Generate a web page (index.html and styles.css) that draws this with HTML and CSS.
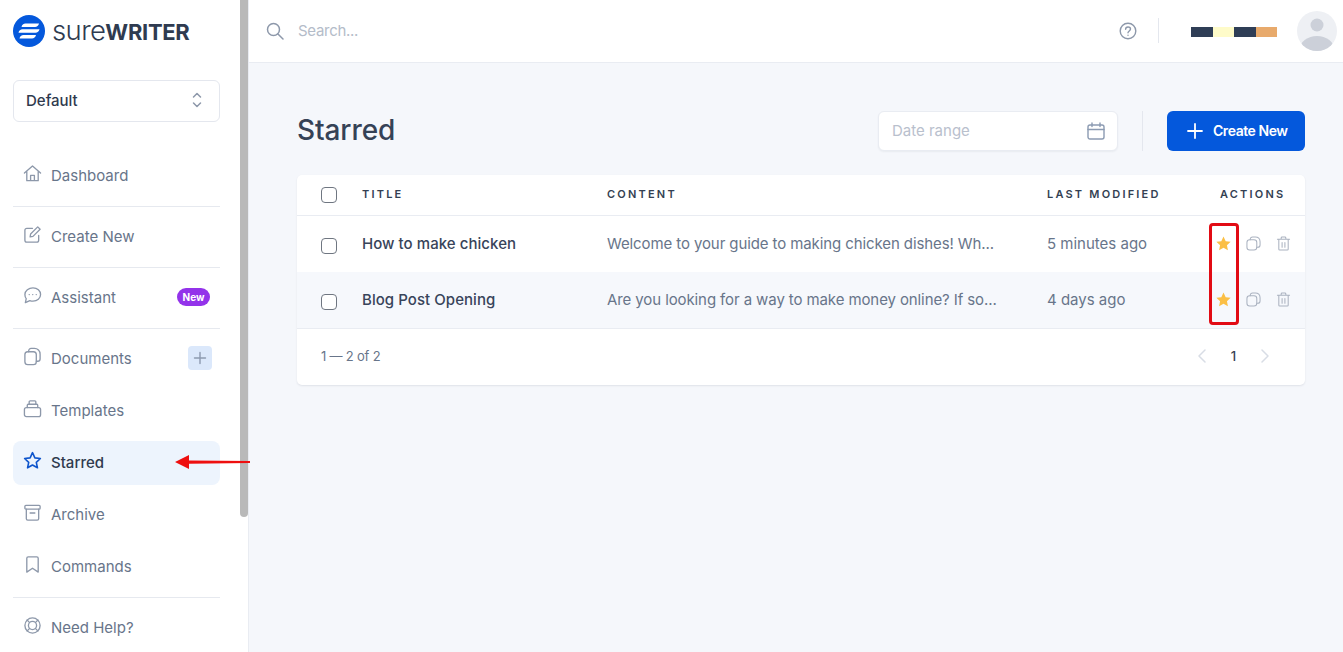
FILE: index.html
```html
<!DOCTYPE html>
<html lang="en">
<head>
<meta charset="utf-8" />
<title>SureWriter - Starred</title>
<link rel="stylesheet" href="styles.css">
</head>
<body>

<div class="app">
  <aside class="sidebar">
    <div class="logo">
      <svg class="logo-mark" width="32" height="32" viewBox="0 0 32 32">
        <circle cx="16" cy="16" r="16" fill="#0458dc"/>
        <path d="M8.500 12c.4-2.300 2-3.500 4-3.500H26c-.5 2.300-2 3.500-4 3.500zM5.500 17.700c.4-2.300 2-3.500 4-3.500h17c-.5 2.300-2 3.500-4 3.500zM6.500 23.400c.4-2.300 2-3.500 4-3.500H23c-.5 2.300-2 3.500-4 3.500z" fill="#fff"/>
      </svg>
      <span class="logo-text"><span class="logo-thin">sure</span><b>WRITER</b></span>
    </div>

    <div class="select">
      <span>Default</span>
      <svg width="12" height="18" viewBox="0 0 12 18" fill="none" stroke="#8d98aa" stroke-width="1.500" stroke-linecap="round" stroke-linejoin="round"><path d="M2.500 6 6 2.500 9.500 6M2.500 12 6 15.500 9.500 12"/></svg>
    </div>

    <nav class="nav">
      <a class="nav-item">
        <svg class="nav-icon" viewBox="0 0 20 20"><path d="M1.500 9.500 10 2l8.500 7.500M4 8v9.500h12V8M8 17.500V12h4v5.500"/></svg>
        Dashboard
      </a>
      <hr class="nav-sep">
      <a class="nav-item">
        <svg class="nav-icon" viewBox="0 0 20 20"><path d="M16.500 11v5a2 2 0 0 1-2 2H4a2 2 0 0 1-2-2V5.500a2 2 0 0 1 2-2h6M8 9.500 15.500 2l2.500 2.500L10.500 12 7.500 12.500z"/></svg>
        Create New
      </a>
      <hr class="nav-sep">
      <a class="nav-item">
        <svg class="nav-icon" viewBox="0 0 20 20"><path d="M10.500 2C15 2 18.500 5 18.500 9s-3.500 7-8 7c-1.200 0-2.300-.2-3.300-.6L2.500 17.500l.9-4.200C2.300 12.100 2 10.600 2 9c0-4 4-7 8.500-7z"/><path d="M6.500 9h.1M10.200 9h.1M13.900 9h.1"/></svg>
        Assistant
        <span class="badge">New</span>
      </a>
      <hr class="nav-sep">
      <a class="nav-item">
        <svg class="nav-icon" viewBox="0 0 20 20"><path d="M6 5V4a2.500 2.500 0 0 1 2.500-2.500H12c3.400 0 6 2.600 6 6V12.500A2.500 2.500 0 0 1 15.500 15H14"/><rect x="2" y="5" width="12" height="13.500" rx="3"/></svg>
        Documents
        <span class="add-btn"><svg width="14" height="14" viewBox="0 0 14 14" fill="none" stroke="#8d9ab0" stroke-width="1.400" stroke-linecap="round"><path d="M7 1.500v11M1.500 7h11"/></svg></span>
      </a>
      <a class="nav-item">
        <svg class="nav-icon" viewBox="0 0 20 20"><rect x="1.500" y="9" width="17" height="9.500" rx="2"/><path d="M4.500 9V6.500a1 1 0 0 1 1-1h9a1 1 0 0 1 1 1V9M6.500 5.500V3a1 1 0 0 1 1-1h5a1 1 0 0 1 1 1v2.500"/></svg>
        Templates
      </a>
      <a class="nav-item active">
        <svg class="nav-icon" viewBox="0 0 20 20"><path d="m10 1.800 2.500 5.400 5.800.7-4.300 4 1.200 5.800-5.200-2.900-5.200 2.900L6 11.900l-4.300-4 5.800-.7z"/></svg>
        Starred
      </a>
      <a class="nav-item">
        <svg class="nav-icon" viewBox="0 0 20 20"><rect x="2" y="2.500" width="16" height="4" rx="1"/><path d="M3.500 6.500v10a1.500 1.500 0 0 0 1.500 1.500h10a1.500 1.500 0 0 0 1.500-1.500v-10M7.500 10.500h5"/></svg>
        Archive
      </a>
      <a class="nav-item">
        <svg class="nav-icon" viewBox="0 0 20 20"><path d="M4 3.500A1.500 1.500 0 0 1 5.500 2h9A1.500 1.500 0 0 1 16 3.500V18l-6-4-6 4z"/></svg>
        Commands
      </a>
      <hr class="nav-sep">
      <a class="nav-item">
        <svg class="nav-icon" viewBox="0 0 20 20"><circle cx="10" cy="10" r="8"/><circle cx="10" cy="10" r="4.300"/><path d="m4.300 4.300 2.700 2.700M15.700 4.300 13 7M4.300 15.700 7 13M15.700 15.700 13 13"/></svg>
        Need Help?
      </a>
    </nav>
    <div class="scroll-thumb"></div>
  </aside>

  <div class="content">
    <header class="topbar">
      <svg class="search-icon" width="18" height="18" viewBox="0 0 18 18" fill="none" stroke="#8d98aa" stroke-width="1.500" stroke-linecap="round"><circle cx="7.500" cy="7.500" r="6"/><path d="m12 12 5 5"/></svg>
      <span class="search-text">Search...</span>
      <svg class="help-icon" width="18" height="18" viewBox="0 0 18 18" fill="none" stroke="#8d98aa" stroke-width="1.400" stroke-linecap="round"><circle cx="9" cy="9" r="7.800"/><path d="M6.600 7.200C6.600 5.800 7.700 5 9 5s2.500.8 2.500 2.100c0 1.800-2.500 1.900-2.500 3.700"/><path d="M9 13.200h.01"/></svg>
      <span class="top-sep"></span>
      <div class="redacted">
        <span class="navy"></span><span class="cream"></span><span class="navy"></span><span class="tan"></span>
      </div>
      <svg class="avatar" width="40" height="40" viewBox="0 0 40 40">
        <defs><clipPath id="avatar-clip"><circle cx="20" cy="20" r="20"/></clipPath></defs>
        <circle cx="20" cy="20" r="20" fill="#eef0f4"/>
        <g clip-path="url(#avatar-clip)" fill="#ccd0d9">
          <circle cx="20" cy="14" r="6.500"/>
          <ellipse cx="20" cy="38" rx="17" ry="13"/>
        </g>
      </svg>
    </header>

    <main class="main">
      <div class="page-head">
        <h1>Starred</h1>
        <div class="date-range">
          <span>Date range</span>
          <svg width="18" height="18" viewBox="0 0 18 18" fill="none" stroke="#8c9bb2" stroke-width="1.400" stroke-linecap="round"><rect x="1" y="3" width="16" height="14" rx="2"/><path d="M1 7.500h16M5 1v3.500M13 1v3.500"/></svg>
        </div>
        <span class="head-sep"></span>
        <button class="btn-primary">
          <svg width="16" height="16" viewBox="0 0 16 16" fill="none" stroke="#fff" stroke-width="1.800" stroke-linecap="round"><path d="M8 1v14M1 8h14"/></svg>
          Create New
        </button>
      </div>

      <section class="card">
        <div class="row row-head">
          <span class="check"></span>
          <span>Title</span>
          <span>Content</span>
          <span>Last Modified</span>
          <span class="col-actions">Actions</span>
        </div>
        <div class="row">
          <span class="check"></span>
          <span class="cell-title">How to make chicken</span>
          <span class="cell-text cell-content">Welcome to your guide to making chicken dishes! Wh...</span>
          <span class="cell-text">5 minutes ago</span>
          <span class="actions">
            <svg width="15" height="15" viewBox="0 0 20 20"><path d="m10 .8 2.900 6.100 6.600.8-4.900 4.600 1.300 6.600L10 15.700l-5.900 3.200 1.300-6.600L.5 7.700l6.600-.8z" fill="#fbbf45"/></svg>
            <svg class="act-icon" viewBox="0 0 16 16"><path d="M4.500 4V3.500A2.500 2.500 0 0 1 7 1h3c3 0 5 2 5 5v3.500a2.500 2.500 0 0 1-2.500 2.500h-1"/><rect x="1" y="4" width="10.500" height="11" rx="3"/></svg>
            <svg class="act-icon" viewBox="0 0 16 16"><path d="M1.500 3.500h13M5.500 3.500V2a1 1 0 0 1 1-1h3a1 1 0 0 1 1 1v1.500M3 3.500V14a1 1 0 0 0 1 1h8a1 1 0 0 0 1-1V3.500M6.500 7v5M9.500 7v5"/></svg>
          </span>
        </div>
        <div class="row row-alt">
          <span class="check"></span>
          <span class="cell-title">Blog Post Opening</span>
          <span class="cell-text cell-content">Are you looking for a way to make money online? If so...</span>
          <span class="cell-text">4 days ago</span>
          <span class="actions">
            <svg width="15" height="15" viewBox="0 0 20 20"><path d="m10 .8 2.900 6.100 6.600.8-4.900 4.600 1.300 6.600L10 15.700l-5.900 3.200 1.300-6.600L.5 7.700l6.600-.8z" fill="#fbbf45"/></svg>
            <svg class="act-icon" viewBox="0 0 16 16"><path d="M4.500 4V3.500A2.500 2.500 0 0 1 7 1h3c3 0 5 2 5 5v3.500a2.500 2.500 0 0 1-2.500 2.500h-1"/><rect x="1" y="4" width="10.500" height="11" rx="3"/></svg>
            <svg class="act-icon" viewBox="0 0 16 16"><path d="M1.500 3.500h13M5.500 3.500V2a1 1 0 0 1 1-1h3a1 1 0 0 1 1 1v1.500M3 3.500V14a1 1 0 0 0 1 1h8a1 1 0 0 0 1-1V3.500M6.500 7v5M9.500 7v5"/></svg>
          </span>
        </div>
        <div class="card-foot">
          <span>1 — 2 of 2</span>
          <div class="pager">
            <svg width="10" height="14" viewBox="0 0 10 14" fill="none" stroke="#d8dde5" stroke-width="1.500" stroke-linecap="round" stroke-linejoin="round"><path d="M8 1 2 7l6 6"/></svg>
            <b>1</b>
            <svg width="10" height="14" viewBox="0 0 10 14" fill="none" stroke="#d8dde5" stroke-width="1.500" stroke-linecap="round" stroke-linejoin="round"><path d="m2 1 6 6-6 6"/></svg>
          </div>
        </div>
      </section>
    </main>
  </div>
</div>

<!-- annotations on top of the screenshot -->
<svg class="arrow" width="76" height="16" viewBox="0 0 76 16">
  <path d="M75 7 14 6.500V1L0 8l14 7V9.700L75 9z" fill="#ee0f0f"/>
</svg>
<div class="red-box"></div>

</body>
</html>
```

FILE: styles.css
```css
* { box-sizing: border-box; }

html, body { height: 100%; }

body {
  margin: 0;
  overflow: hidden;
  background: #f5f7fb;
  color: #343f52;
  font-family: "Inter", "Liberation Sans", sans-serif;
  font-size: 15px;
}

.app { display: flex; height: 652px; }

/* sidebar */
.sidebar {
  position: relative;
  flex: 0 0 249px;
  padding: 0 28px 0 13px;
  background: #fff;
  border-right: 1px solid #e9ecf2;
  overflow: hidden;
}

.scroll-thumb {
  position: absolute;
  top: 0;
  left: 240px;
  width: 8px;
  height: 517px;
  background: #b9b9b9;
  border-radius: 0 0 4px 4px;
}

.logo { display: flex; align-items: center; gap: 7px; height: 62px; }
.logo-mark { flex: none; }
.logo-text { margin-top: -3px; font-size: 27.500px; letter-spacing: -0.6px; color: #2f3b50; white-space: nowrap; }
.logo-thin { font-weight: 300; }
.logo-text b { font-weight: 700; font-size: 22px; letter-spacing: -0.3px; }

.select {
  display: flex;
  align-items: center;
  justify-content: space-between;
  height: 42px;
  margin-top: 18px;
  padding: 0 16px 2px 12px;
  border: 1px solid #e4e7ee;
  border-radius: 6px;
  font-weight: 500;
  color: #2f3a4e;
}

.nav { margin-top: 32px; }

.nav-item {
  display: flex;
  align-items: center;
  gap: 9px;
  height: 44px;
  margin-bottom: 8px;
  padding: 0 10px 2px;
  border-radius: 8px;
  color: #68758a;
}

.nav-item.active { background: #edf4fd; color: #2f3a4e; font-weight: 500; }

.nav-icon {
  flex: none;
  width: 19px;
  height: 19px;
  margin-top: -3px;
  fill: none;
  stroke: #8d98aa;
  stroke-width: 1.400;
  stroke-linecap: round;
  stroke-linejoin: round;
}

.active .nav-icon { stroke: #0f55cc; stroke-width: 1.700; }

.nav-sep { height: 1px; margin: 0 0 8px; border: 0; background: #e6e9ef; }

.badge {
  margin-left: auto;
  padding: 0 5.500px;
  height: 18px;
  line-height: 18px;
  border-radius: 9px;
  background: #9333ea;
  color: #fff;
  font-size: 10px;
  font-weight: 700;
}

.add-btn {
  display: flex;
  align-items: center;
  justify-content: center;
  width: 24px;
  height: 24px;
  margin: -1px -2px 0 auto;
  border-radius: 4px;
  background: #dbe8fb;
}

/* top bar */
.content { flex: 1; min-width: 0; }

.topbar {
  display: flex;
  align-items: center;
  height: 63px;
  padding: 0 6px 1px 17px;
  background: #fff;
  border-bottom: 1px solid #e9ecf2;
}

.search-text { margin-left: 14px; color: #b4bcc9; letter-spacing: -0.3px; }

.help-icon { margin-left: auto; margin-top: 1px; }

.top-sep { width: 1px; height: 25px; margin: 0 32px 0 21px; background: #e4e7ee; }

.redacted { display: flex; height: 10px; margin-top: 2px; }
.redacted span { width: 21.500px; }
.redacted .navy { background: #2f3e56; }
.redacted .cream { background: #fefbc9; }
.redacted .tan { background: #e8aa6c; }

.avatar { margin-left: 20px; }

/* page */
.main { padding: 48px 38px 0 48px; }

.page-head { display: flex; align-items: center; height: 40px; }

h1 { margin: 0 auto 0 0; padding-bottom: 2px; font-size: 28px; font-weight: 500; letter-spacing: -0.1px; color: #354256; }

.date-range {
  display: flex;
  align-items: center;
  justify-content: space-between;
  width: 240px;
  height: 40px;
  padding: 0 12px 0 13px;
  background: #fff;
  border: 1px solid #e9ecf2;
  border-radius: 6px;
  box-shadow: 0 1px 2px rgba(40, 50, 70, 0.06);
  color: #b9c0cd;
}

.date-range span { margin-top: -1px; }

.head-sep { width: 1px; height: 40px; margin: 0 24px; background: #e4e7ee; }

.btn-primary {
  display: flex;
  align-items: center;
  gap: 10px;
  width: 138px;
  height: 40px;
  padding: 0 0 2px 20px;
  border: 0;
  border-radius: 6px;
  background: #0458dc;
  color: #fff;
  font: 600 14px "Inter", "Liberation Sans", sans-serif;
  letter-spacing: -0.45px;
  white-space: nowrap;
}

.btn-primary svg { flex: none; margin-top: 2px; }

.card {
  margin-top: 24px;
  background: #fff;
  border-radius: 5px;
  box-shadow: 0 1px 2px rgba(40, 50, 70, 0.1);
}

.row {
  display: grid;
  grid-template-columns: 41px 245px 440px 173px 1fr;
  align-items: center;
  height: 56px;
  padding: 0 0 2px 24px;
}

.row-alt { background: #f6f8fc; }

.row-head {
  height: 41px;
  border-bottom: 1px solid #e9ecf2;
  font-size: 11px;
  font-weight: 600;
  letter-spacing: 2.200px;
  text-transform: uppercase;
  color: #343f52;
}

.col-actions { white-space: nowrap; }

.check {
  width: 16px;
  height: 16px;
  margin-top: 5px;
  border: 1px solid #6f7681;
  border-radius: 4px;
  background: #fff;
}

.row-head .check { margin-top: 2px; }

.cell-title { font-weight: 500; color: #38445a; white-space: nowrap; letter-spacing: 0.05px; }
.cell-text { color: #68758a; white-space: nowrap; }
.cell-content { letter-spacing: -0.1px; }

.actions { display: flex; align-items: center; gap: 15px; margin-left: -4px; }

.act-icon {
  flex: none;
  width: 15px;
  height: 15px;
  fill: none;
  stroke: #aab2c0;
  stroke-width: 1.100;
  stroke-linecap: round;
  stroke-linejoin: round;
}

.card-foot {
  display: flex;
  align-items: center;
  justify-content: space-between;
  height: 57px;
  padding: 0 35px 2px 24px;
  border-top: 1px solid #e9ecf2;
  font-size: 13px;
  letter-spacing: -0.2px;
  color: #68758a;
}

.pager { display: flex; align-items: center; gap: 24px; color: #343f52; }
.pager b { font-weight: 500; }

/* annotations */
.arrow { position: absolute; left: 175px; top: 454px; }

.red-box {
  position: absolute;
  left: 1209px;
  top: 223px;
  width: 30px;
  height: 102px;
  border: 3px solid #e20b14;
  border-radius: 4px;
}
```
